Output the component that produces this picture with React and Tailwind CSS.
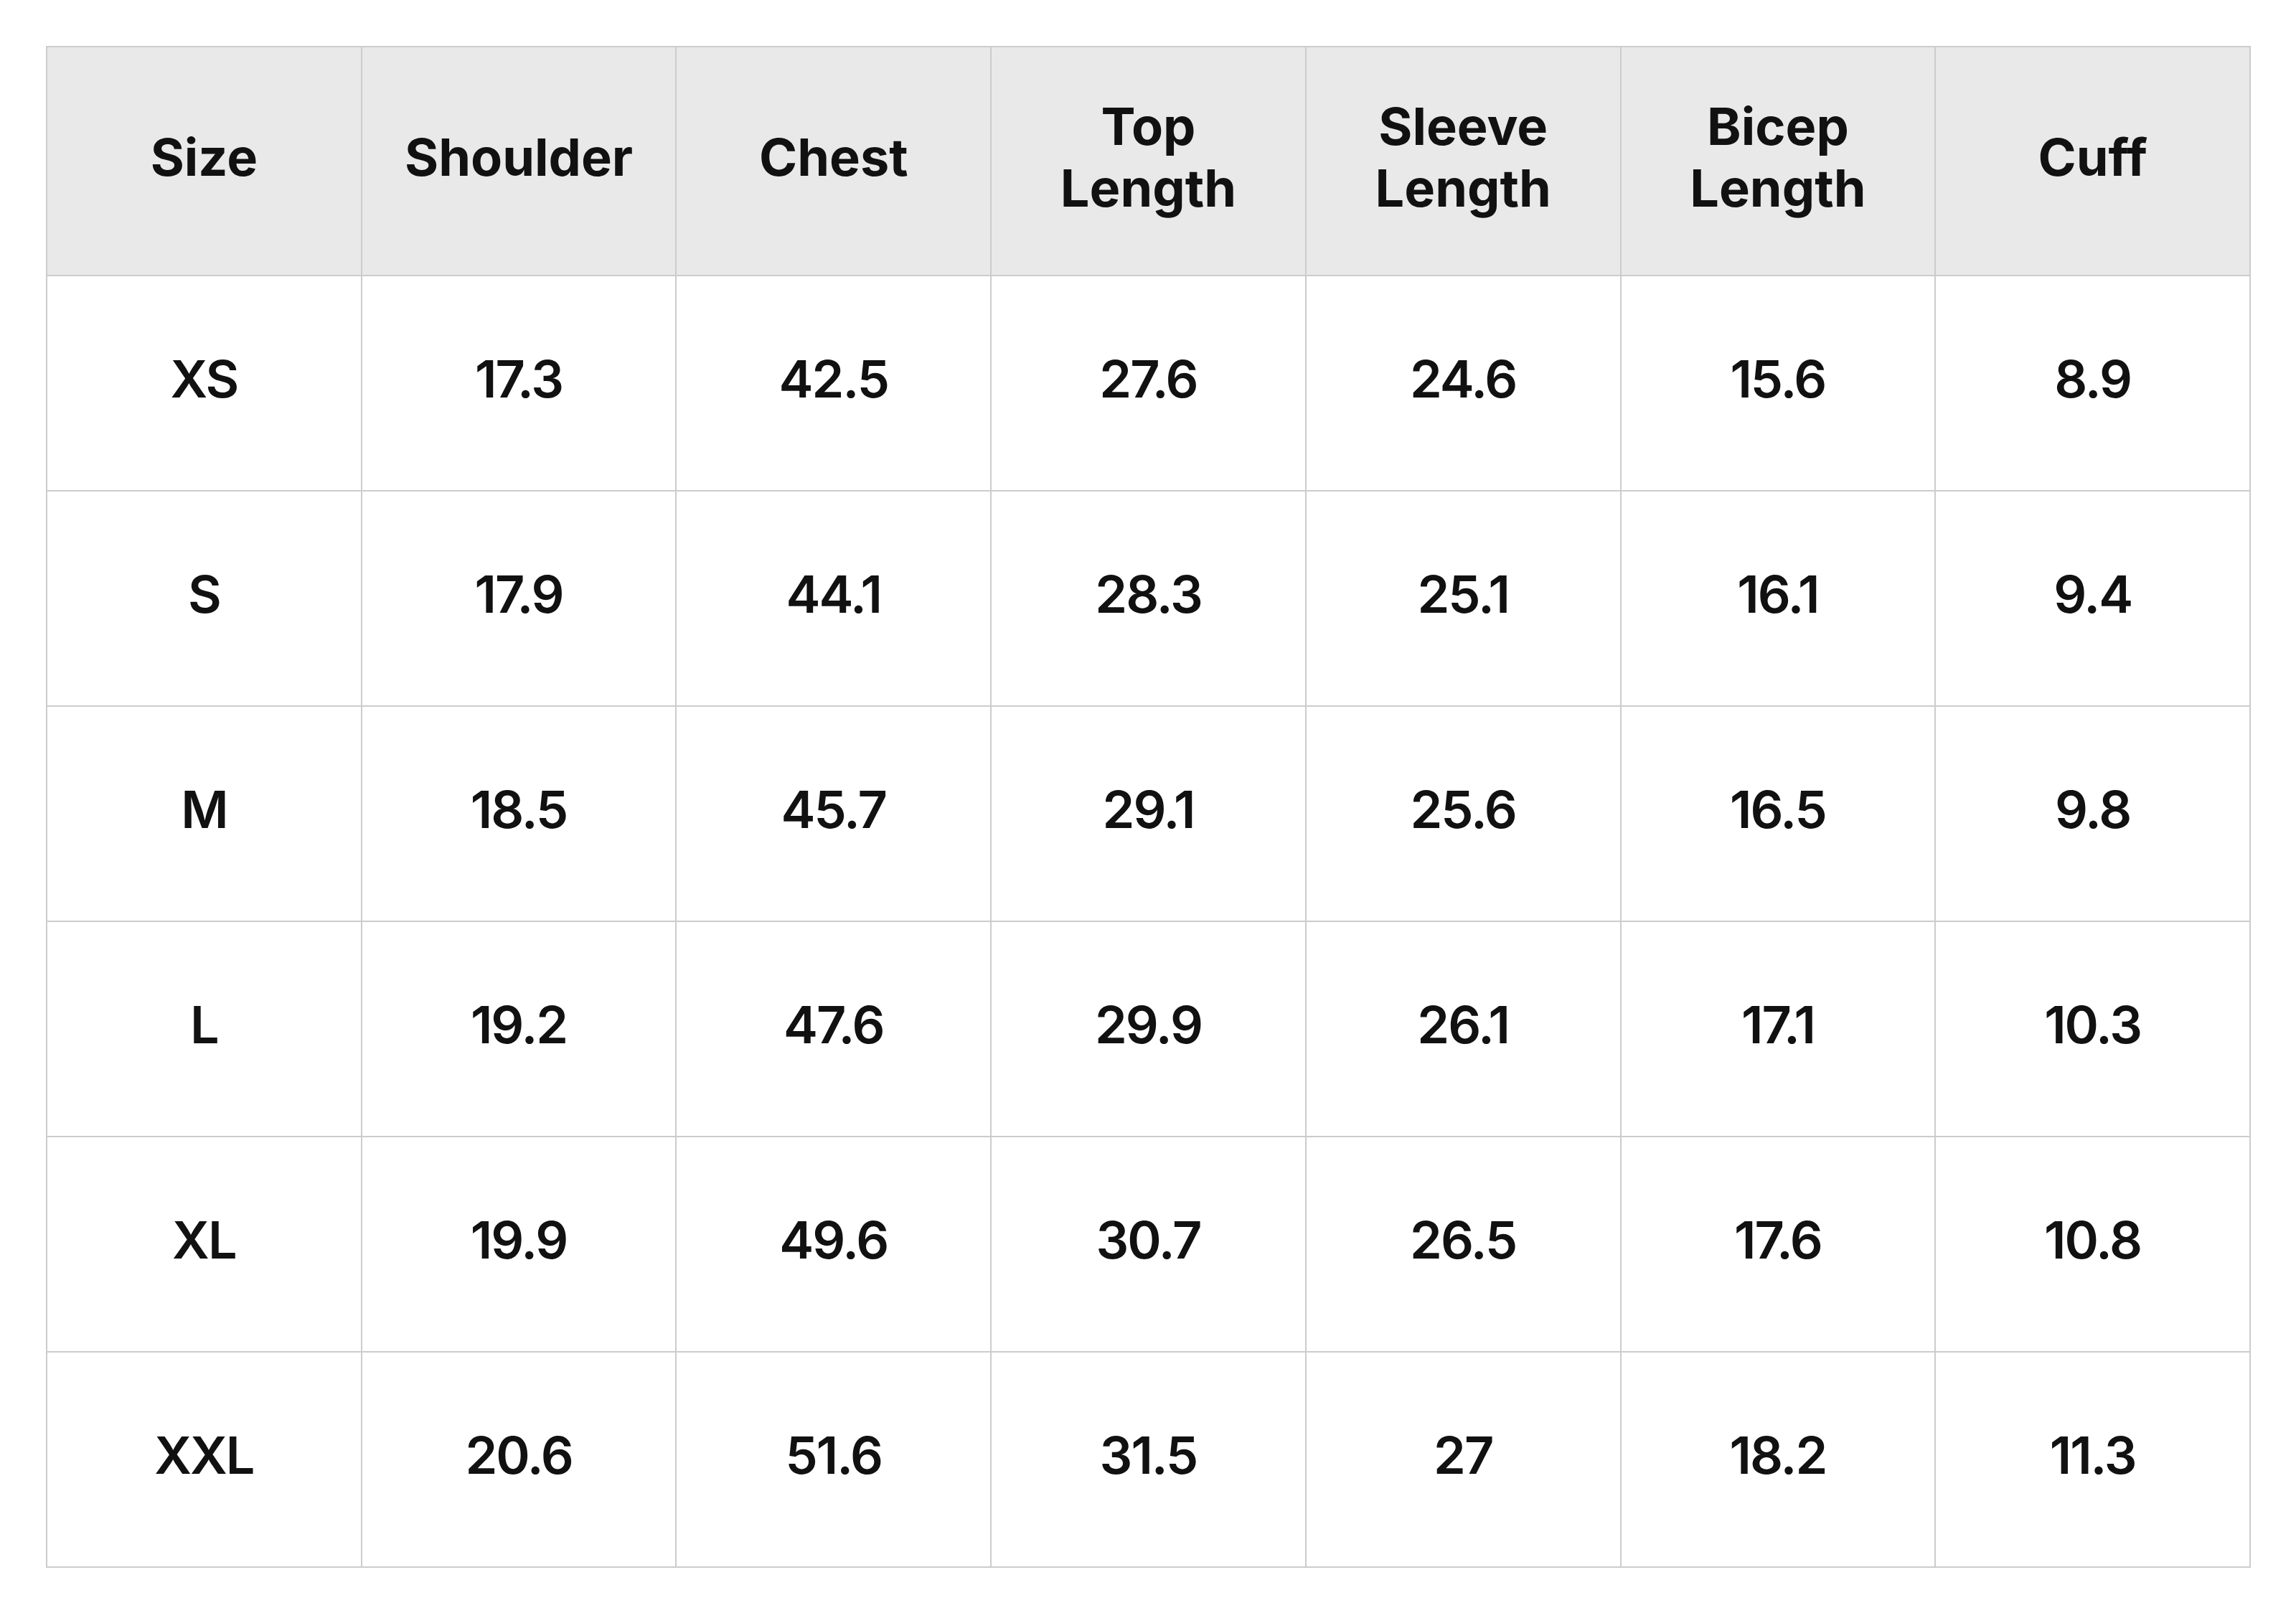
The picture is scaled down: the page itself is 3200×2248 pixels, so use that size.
const headers = ['Size', 'Shoulder', 'Chest', 'Top Length', 'Sleeve Length', 'Bicep Length', 'Cuff']

const rows = [
  ['XS', '17.3', '42.5', '27.6', '24.6', '15.6', '8.9'],
  ['S', '17.9', '44.1', '28.3', '25.1', '16.1', '9.4'],
  ['M', '18.5', '45.7', '29.1', '25.6', '16.5', '9.8'],
  ['L', '19.2', '47.6', '29.9', '26.1', '17.1', '10.3'],
  ['XL', '19.9', '49.6', '30.7', '26.5', '17.6', '10.8'],
  ['XXL', '20.6', '51.6', '31.5', '27', '18.2', '11.3'],
]

export default function App() {
  return (
    <div className="min-h-screen bg-white p-16 text-[#111111]" style={{ fontFamily: 'Inter, "Liberation Sans", sans-serif' }}>
      <div className="grid w-[3073px] grid-cols-7 border-l-2 border-t-2 border-[#cccccc]">
        {headers.map(h => (
          <div
            key={h}
            className="flex h-[319px] flex-col items-center justify-center border-b-2 border-r-2 border-[#cccccc] bg-[#e9e9e9] pb-3 text-center text-[72px] font-bold leading-[86px]"
          >
            {h.split(' ').map((w, i) => (
              <span key={i}>{w}</span>
            ))}
          </div>
        ))}
        {rows.map(row =>
          row.map((cell, i) => (
            <div
              key={row[0] + i}
              className="flex h-[300px] items-center justify-center border-b-2 border-r-2 border-[#cccccc] pb-3 text-[72px] font-semibold tracking-[-2px]"
            >
              {cell}
            </div>
          ))
        )}
      </div>
    </div>
  )
}
